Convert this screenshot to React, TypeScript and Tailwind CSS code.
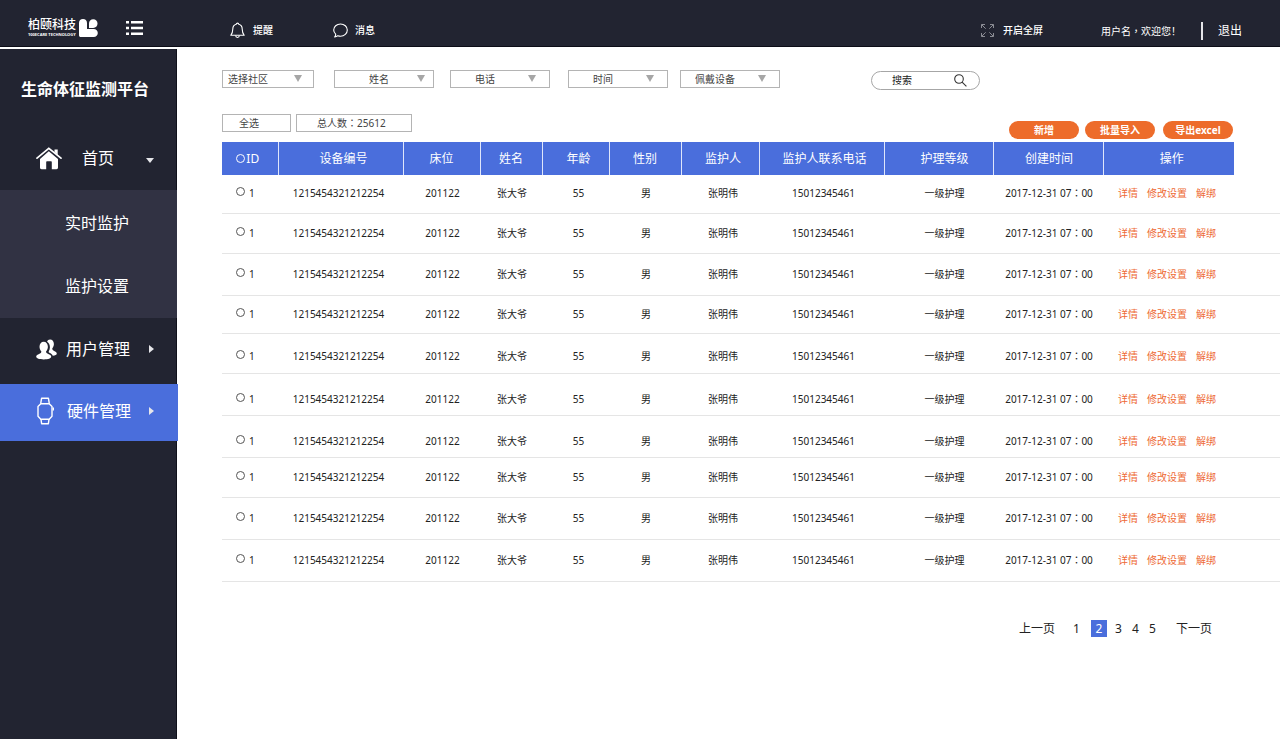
import React, { useState } from 'react';
import clsx from 'clsx';

const filters = [
  { label: '选择社区', box: 'w-[92px] mr-[20px]', text: 'pl-[5px]', arrow: 'right-[12px]' },
  { label: '姓名', box: 'w-[100px] mr-[16px]', text: 'pl-[34px]', arrow: 'right-[9px]' },
  { label: '电话', box: 'w-[100px] mr-[18px]', text: 'pl-[24px]', arrow: 'right-[14px]' },
  { label: '时间', box: 'w-[100px] mr-[12px]', text: 'pl-[24px]', arrow: 'right-[14px]' },
  { label: '佩戴设备', box: 'w-[100px] mr-[91px]', text: 'pl-[14px]', arrow: 'right-[14px]' },
];

const columns = [
  { title: '设备编号', col: 'w-[125px]', head: 'pl-[6px]', cell: 'pr-[4px]' },
  { title: '床位', col: 'w-[77px]', head: '', cell: 'pl-[2px]' },
  { title: '姓名', col: 'w-[62px]', head: '', cell: 'pl-[2px]' },
  { title: '年龄', col: 'w-[67px]', head: 'pl-[6px]', cell: 'pl-[6px]' },
  { title: '性别', col: 'w-[72px]', head: '', cell: 'pl-[2px]' },
  { title: '监护人', col: 'w-[78px]', head: 'pl-[6px]', cell: 'pl-[6px]' },
  { title: '监护人联系电话', col: 'w-[125px]', head: 'pl-[6px]', cell: 'pl-[4px]' },
  { title: '护理等级', col: 'w-[109px]', head: 'pl-[12px]', cell: 'pl-[12px]' },
  { title: '创建时间', col: 'w-[110px]', head: 'pl-[2px]', cell: "pl-[2px] font-['Noto_Sans','Noto_Sans_CJK_TC',sans-serif]" },
];

const record = [
  '1215454321212254',
  '201122',
  '张大爷',
  '55',
  '男',
  '张明伟',
  '15012345461',
  '一级护理',
  '2017-12-31 07：00',
];

const rows = [
  'h-[38px]',
  'h-[40px]',
  'h-[42px]',
  'h-[38px]',
  'h-[40px] *:pt-[6px]',
  'h-[42px] *:pt-[10px]',
  'h-[42px] *:pt-[10px]',
  'h-[40px]',
  'h-[42px]',
  'h-[42px]',
];

const actions = ['详情', '修改设置', '解绑'];
const tools = [
  { label: '新增', gap: 'mr-[6px]' },
  { label: '批量导入', gap: 'mr-[8px]' },
  { label: '导出excel', gap: '' },
];

function Logo() {
  return (
    <a href="#" className="flex items-center gap-[3px]">
      <span className="flex flex-col whitespace-nowrap">
        <span className="text-[12px] leading-[14px] font-medium">柏颐科技</span>
        <span className="text-[4px] leading-[6px] font-bold">100ECARE TECHNOLOGY</span>
      </span>
      <svg width="19" height="18" viewBox="0 0 19 18" fill="currentColor">
        <path d="M0 4C0 1.600 1.600 0 4 0s4 1.600 4 4v6h6.600c2.600 0 4.200 1.700 4.200 4s-1.600 4-4.200 4H1.800C.7 18 0 17.300 0 16.200z" />
        <path d="M10 9V4.600C10 2 11.700.3 14.200.3s4.300 1.800 4.300 4.300S16.700 9 14.200 9z" />
      </svg>
    </a>
  );
}

function BellIcon() {
  return (
    <svg width="15" height="17" viewBox="0 0 15 17" fill="none" stroke="currentColor" strokeWidth="1.100">
      <path d="M6.300 2.200C6.300.7 8.700.7 8.700 2.200 11.200 2.800 12.200 4.800 12.200 7c0 3 .5 4.500 2 6.300H.8C2.300 11.500 2.800 10 2.800 7c0-2.200 1-4.200 3.500-4.800z" strokeLinejoin="round" />
      <path d="M5.600 13.500c.2 2.600 3.600 2.600 3.800 0" />
    </svg>
  );
}

function BubbleIcon() {
  return (
    <svg width="15" height="15" viewBox="0 0 15 15" fill="none" stroke="currentColor" strokeWidth="1.100">
      <path d="M2.700 11.200C1.400 10.100.7 8.700.7 7.100.7 3.600 3.700 1 7.500 1s6.800 2.600 6.800 6.100-3 6.100-6.800 6.100c-1 0-1.900-.2-2.700-.5-.9.800-2 1.200-3.100 1.200.6-.7 1-1.500 1-2.700z" strokeLinejoin="round" />
    </svg>
  );
}

function ExpandIcon() {
  return (
    <svg width="13" height="13" viewBox="0 0 13 13" fill="none" stroke="#8b8c94" strokeWidth="1">
      <path d="M.5 4V.5H4M.7.7l4 4M9 .5h3.500V4M12.300.7l-4 4M.5 9v3.500H4M.7 12.300l4-4M12.500 9v3.500H9M12.300 12.300l-4-4" />
    </svg>
  );
}

function HomeIcon() {
  return (
    <svg width="26" height="23" viewBox="0 0 26 23" fill="currentColor">
      <path d="M18.500 2.500h3.200v5.600l-3.200-3z" />
      <path d="M1 11.200 12.800 1.300 25 11.200" fill="none" stroke="currentColor" strokeWidth="1.700" strokeLinecap="round" />
      <path d="M12.800 4.300 22 12v8.600c0 1-.6 1.600-1.600 1.600h-4.600v-7c0-.6-.4-1-1-1h-3.600c-.6 0-1 .4-1 1v7H5.600c-1 0-1.600-.6-1.600-1.600V12z" />
    </svg>
  );
}

function UsersIcon() {
  return (
    <svg width="21" height="21" viewBox="0 0 21 21" fill="currentColor">
      <path d="M14 .6c2.400 0 3.900 1.900 3.900 4.400 0 1.700-.6 3.200-1.600 4.300 0 1.600.4 2 2.300 2.900 1.400.6 2.200 1.400 2.200 2.400 0 1.400-1.600 2-4 2.100-.6-1.500-1.800-2.200-3.400-2.900-.7-.4-.9-.8-.7-1.300.8-1.300 1.200-2.700 1.200-4.200 0-2.400-1-4.400-2.800-5.500C11.500 1.400 12.600.6 14 .6z" />
      <path d="M7.700 2.800c2.500 0 4.200 2.100 4.200 4.900 0 1.900-.7 3.500-1.800 4.600-.1 1.700.5 2 2.700 2.900 1.600.6 2.400 1.400 2.400 2.400 0 1.800-3 2.900-7.400 2.900S.2 19.400.2 17.600c0-1 .8-1.800 2.400-2.400 2.200-.9 2.800-1.200 2.700-2.900-1.100-1.100-1.800-2.700-1.800-4.600 0-2.800 1.700-4.900 4.200-4.900z" />
    </svg>
  );
}

function WatchIcon() {
  return (
    <svg width="18" height="28" viewBox="0 0 18 28" fill="none" stroke="currentColor" strokeWidth="1.400">
      <path d="M4.800 6.700h8.400l2.800 2.800v9.800l-2.800 2.900H4.800L2 19.300V9.500z" strokeLinejoin="round" />
      <path d="M4.700 6.700 5.600 1.200h6.800l.9 5.500M5 22.200l.6 4.500h6.800l.6-4.500" strokeLinejoin="round" />
      <path d="M17.300 10.500v3" />
    </svg>
  );
}

function MenuIcon() {
  return (
    <svg width="17" height="14" viewBox="0 0 17 14" fill="currentColor">
      <path d="M0 0h3v2.400H0zM5 0h12v2.400H5zM0 5.800h3v2.400H0zM5 5.800h12v2.400H5zM0 11.600h3V14H0zM5 11.600h12V14H5z" />
    </svg>
  );
}

function Header() {
  return (
    <header className="flex h-[47px] items-center border-b border-[#0c0d17] bg-[#222431] pt-[15px] pr-[38px] pl-[28px] text-[10px] whitespace-nowrap text-white">
      <div className="flex items-center pb-[5px]">
        <Logo />
        <button aria-label="菜单" className="ml-[28px]">
          <MenuIcon />
        </button>
      </div>
      <button className="ml-[87px] flex items-center gap-[8px] font-medium">
        <BellIcon />
        提醒
      </button>
      <button className="ml-[60px] flex items-center gap-[7px] font-medium">
        <BubbleIcon />
        消息
      </button>
      <button className="ml-auto flex items-center gap-[9px] font-medium">
        <ExpandIcon />
        开启全屏
      </button>
      <span className="ml-[58px]">
        用户名<span className="font-['Noto_Sans_CJK_TC',sans-serif]">，</span>欢迎您！
      </span>
      <span className="ml-[20px] h-[18px] w-[2px] bg-[#e4e4e8]" />
      <button className="ml-[15px] text-[12px]">退出</button>
    </header>
  );
}

function Sidebar() {
  const item = 'flex items-center pl-[36px] pr-[22px]';
  return (
    <aside className="w-[177px] shrink-0 border-r border-[#0f101a] bg-[#222431] text-[16px] text-white">
      <h1 className="flex h-[80px] items-center justify-center pr-[6px] font-bold">生命体征监测平台</h1>
      <nav>
        <a href="#home" className={clsx(item, 'h-[61px] pb-[3px]')}>
          <HomeIcon />
          <span className="ml-[20px]">首页</span>
          <span className="mt-[4px] ml-auto border-x-4 border-t-[5px] border-x-transparent border-t-[#e6e6ea]" />
        </a>
        <div className="-mr-px bg-[#313243]">
          <a href="#live" className="flex h-[64px] items-center pt-[2px] pl-[65px]">实时监护</a>
          <a href="#settings" className="flex h-[64px] items-center pl-[65px]">监护设置</a>
        </div>
        <a href="#users" className={clsx(item, 'mb-[4px] h-[62px]')}>
          <UsersIcon />
          <span className="ml-[9px]">用户管理</span>
          <span className="ml-auto border-y-4 border-l-[5px] border-y-transparent border-l-[#e6e6ea]" />
        </a>
        <a href="#devices" className={clsx(item, '-mr-[2px] h-[57px] bg-[#4a6edc] pb-[3px]')}>
          <WatchIcon />
          <span className="ml-[13px]">硬件管理</span>
          <span className="mr-[2px] ml-auto border-y-4 border-l-[5px] border-y-transparent border-l-[#e6e6ea]" />
        </a>
      </nav>
    </aside>
  );
}

function FilterBar() {
  return (
    <form className="flex items-start text-[10px] text-[#444]">
      {filters.map((f) => (
        <label key={f.label} className={clsx('relative block shrink-0', f.box)}>
          <select
            aria-label={f.label}
            className={clsx('block h-[18px] w-full appearance-none border border-[#b4b4b4] bg-white leading-[16px]', f.text)}
          >
            <option>{f.label}</option>
          </select>
          <span
            className={clsx(
              'pointer-events-none absolute top-[5px] border-x-4 border-t-[7px] border-x-transparent border-t-[#a6a6a6]',
              f.arrow
            )}
          />
        </label>
      ))}
      <div className="mt-px flex h-[19px] w-[109px] items-center rounded-full border border-[#a6a6a6] pr-[12px] pl-[20px]">
        <input aria-label="搜索" placeholder="搜索" className="w-full min-w-0 outline-none placeholder:text-[#222]" />
        <svg width="13" height="13" viewBox="0 0 13 13" className="shrink-0" fill="none" stroke="#333" strokeWidth="1.100">
          <circle cx="5" cy="5" r="4.300" />
          <path d="m8.100 8.100 4.300 4.300" />
        </svg>
      </div>
    </form>
  );
}

function Toolbar() {
  return (
    <div className="mt-[24px] mr-[47px] flex h-[28px] justify-between pb-[3px] text-[10px]">
      <div className="flex items-start gap-[5px] text-[#444]">
        <button className="h-[18px] w-[69px] border border-[#b4b4b4] pl-[16px] text-left leading-[16px]">全选</button>
        <div className="h-[18px] w-[116px] border border-[#b4b4b4] pl-[20px] font-['Noto_Sans','Noto_Sans_CJK_TC',sans-serif] leading-[16px]">
          总人数：25612
        </div>
      </div>
      <div className="flex items-end">
        {tools.map((t) => (
          <button
            key={t.label}
            className={clsx('h-[18px] w-[70px] rounded-full bg-[#ed6c2b] leading-[18px] font-bold text-white', t.gap)}
          >
            {t.label}
          </button>
        ))}
      </div>
    </div>
  );
}

function DeviceTable() {
  const [selected, setSelected] = useState<number | null>(null);
  const radio = 'size-[9px] appearance-none rounded-full border checked:bg-[#4a6edc]';

  return (
    <table className="w-full table-fixed border-collapse text-[10px] whitespace-nowrap text-[#222]">
      <colgroup>
        <col className="w-[56px]" />
        {columns.map((c) => (
          <col key={c.title} className={c.col} />
        ))}
        <col className="w-[131px]" />
        <col />
      </colgroup>
      <thead>
        <tr className="h-[33px] text-[12px] text-white *:font-normal">
          <th className="bg-[#4a6edc]">
            <label className="flex items-center justify-center gap-px pr-[4px]">
              <input type="radio" name="device" className={clsx(radio, 'border-white')} />
              ID
            </label>
          </th>
          {columns.map((c) => (
            <th key={c.title} className={clsx('border-l border-[#dfe6fb] bg-[#4a6edc]', c.head)}>
              {c.title}
            </th>
          ))}
          <th className="border-l border-[#dfe6fb] bg-[#4a6edc] pl-[6px]">操作</th>
          <td />
        </tr>
      </thead>
      <tbody>
        {rows.map((row, i) => (
          <tr key={i} className={clsx('border-b border-[#e5e5e5] text-center', row)}>
            <td>
              <label className="flex items-center gap-[4px] pl-[14px]">
                <input
                  type="radio"
                  name="device"
                  checked={selected === i}
                  onChange={() => setSelected(i)}
                  className={clsx(radio, 'mb-[4px] border-[#555]')}
                />
                1
              </label>
            </td>
            {columns.map((c, j) => (
              <td key={c.title} className={c.cell}>
                {record[j]}
              </td>
            ))}
            <td>
              <div className="flex gap-[9px] pl-[15px] text-[#ee6a35]">
                {actions.map((a) => (
                  <button key={a}>{a}</button>
                ))}
              </div>
            </td>
            <td />
          </tr>
        ))}
      </tbody>
    </table>
  );
}

function Pagination() {
  const [page, setPage] = useState(2);

  return (
    <nav className="mt-[38px] mr-[68px] flex h-[18px] items-center justify-end text-[12px] text-[#222]">
      <button className="mr-[13px]">上一页</button>
      {[1, 2, 3, 4, 5].map((n) => (
        <button
          key={n}
          onClick={() => setPage(n)}
          className={clsx('h-[17px]', page === n ? 'mr-[3px] ml-[6px] w-[16px] bg-[#4a6edc] text-white' : 'w-[17px]')}
        >
          {n}
        </button>
      ))}
      <button className="ml-[15px]">下一页</button>
    </nav>
  );
}

export default function App() {
  return (
    <div className="flex min-h-screen flex-col bg-white font-['Noto_Sans','Noto_Sans_CJK_SC',sans-serif]">
      <Header />
      <div className="mt-[2px] flex flex-1">
        <Sidebar />
        <main className="min-w-0 flex-1 pt-[21px] pl-[45px]">
          <FilterBar />
          <Toolbar />
          <DeviceTable />
          <Pagination />
        </main>
      </div>
    </div>
  );
}
